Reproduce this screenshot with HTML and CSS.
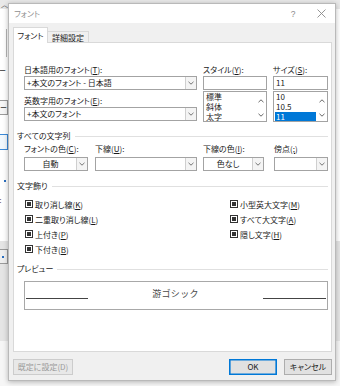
FILE: index.html
```html
<!DOCTYPE html>
<html lang="ja">
<head>
<meta charset="utf-8">
<title>フォント</title>
<link rel="stylesheet" href="styles.css">
</head>
<body>
<div class="bg">
  <div class="bg-r r1"><span class="caret">︿</span></div>
  <div class="bg-r r2"><div class="vline"></div></div>
  <div class="bg-r r3"><span class="frag">ター</span></div>
  <div class="bg-r r4"><div class="fbox">ー</div></div>
  <div class="bg-r r5"><div class="fbox blue"></div></div>
  <div class="bg-r r6"><span class="frag">ン</span></div>
  <div class="bg-r r7"><span class="dot"></span></div>
  <div class="bg-r r8"><span class="frag">を:</span></div>
  <div class="bg-r r8b"><span class="frag">送</span></div>
  <div class="bg-r r9"><span class="frag">ー</span></div>
  <div class="bg-r r10"><div class="fbox small"><span class="dot"></span></div></div>
  <div class="bg-r r11"></div>
</div>

<div class="dialog">
  <div class="titlebar">
    <span class="title">フォント</span>
    <span class="tb-btn">?</span>
    <span class="tb-btn">
      <svg width="9" height="9" viewBox="0 0 9 9"><path d="M0.5 0.5 L8.5 8.5 M8.5 0.5 L0.5 8.5" stroke="#8a8a8a" stroke-width="0.9" fill="none"/></svg>
    </span>
  </div>
  <div class="dlg-body">
    <div class="tabs">
      <div class="tab active">フォント</div>
      <div class="tab">詳細設定</div>
    </div>
    <div class="panel">
      <div class="font-grid">
        <div class="col col-main">
          <div class="lbl">日本語用のフォント(<u>T</u>):</div>
          <div class="combo"><span class="val">+本文のフォント - 日本語</span><span class="arrow"><svg width="6" height="4" viewBox="0 0 6 4"><path d="M0.5 0.8 L3 3.2 L5.5 0.8" fill="none" stroke="#666" stroke-width="0.9"/></svg></span></div>
          <div class="lbl lbl-gap">英数字用のフォント(<u>E</u>):</div>
          <div class="combo"><span class="val">+本文のフォント</span><span class="arrow"><svg width="6" height="4" viewBox="0 0 6 4"><path d="M0.5 0.8 L3 3.2 L5.5 0.8" fill="none" stroke="#666" stroke-width="0.9"/></svg></span></div>
        </div>
        <div class="col col-style">
          <div class="lbl">スタイル(<u>Y</u>):</div>
          <div class="textbox"></div>
          <div class="listbox">
            <div class="items">
              <div class="item">標準</div>
              <div class="item">斜体</div>
              <div class="item">太字</div>
            </div>
            <div class="sb">
              <svg width="6" height="4" viewBox="0 0 6 4"><path d="M0.5 3.2 L3 0.8 L5.5 3.2" fill="none" stroke="#555" stroke-width="0.9"/></svg>
              <svg width="6" height="4" viewBox="0 0 6 4"><path d="M0.5 0.8 L3 3.2 L5.5 0.8" fill="none" stroke="#555" stroke-width="0.9"/></svg>
            </div>
          </div>
        </div>
        <div class="col col-size">
          <div class="lbl">サイズ(<u>S</u>):</div>
          <div class="textbox">11</div>
          <div class="listbox">
            <div class="items">
              <div class="item">10</div>
              <div class="item">10.5</div>
              <div class="item sel">11</div>
            </div>
            <div class="sb">
              <svg width="6" height="4" viewBox="0 0 6 4"><path d="M0.5 3.2 L3 0.8 L5.5 3.2" fill="none" stroke="#555" stroke-width="0.9"/></svg>
              <svg width="6" height="4" viewBox="0 0 6 4"><path d="M0.5 0.8 L3 3.2 L5.5 0.8" fill="none" stroke="#555" stroke-width="0.9"/></svg>
            </div>
          </div>
        </div>
      </div>

      <div class="group-h gh-all"><span>すべての文字列</span><i></i></div>
      <div class="color-row">
        <div class="col c-color">
          <div class="lbl">フォントの色(<u>C</u>):</div>
          <div class="combo"><span class="val center">自動</span><span class="arrow"><svg width="6" height="4" viewBox="0 0 6 4"><path d="M0.5 0.8 L3 3.2 L5.5 0.8" fill="none" stroke="#666" stroke-width="0.9"/></svg></span></div>
        </div>
        <div class="col c-under">
          <div class="lbl">下線(<u>U</u>):</div>
          <div class="combo"><span class="val"></span><span class="arrow"><svg width="6" height="4" viewBox="0 0 6 4"><path d="M0.5 0.8 L3 3.2 L5.5 0.8" fill="none" stroke="#666" stroke-width="0.9"/></svg></span></div>
        </div>
        <div class="col c-ucolor">
          <div class="lbl">下線の色(<u>I</u>):</div>
          <div class="combo"><span class="val center">色なし</span><span class="arrow"><svg width="6" height="4" viewBox="0 0 6 4"><path d="M0.5 0.8 L3 3.2 L5.5 0.8" fill="none" stroke="#666" stroke-width="0.9"/></svg></span></div>
        </div>
        <div class="col c-emph">
          <div class="lbl">傍点(<u>;</u>)</div>
          <div class="combo"><span class="val"></span><span class="arrow"><svg width="6" height="4" viewBox="0 0 6 4"><path d="M0.5 0.8 L3 3.2 L5.5 0.8" fill="none" stroke="#666" stroke-width="0.9"/></svg></span></div>
        </div>
      </div>

      <div class="group-h gh-deco"><span>文字飾り</span><i></i></div>
      <div class="checks">
        <div class="chk"><span class="box"><span></span></span>取り消し線(<u>K</u>)</div>
        <div class="chk"><span class="box"><span></span></span>小型英大文字(<u>M</u>)</div>
        <div class="chk"><span class="box"><span></span></span>二重取り消し線(<u>L</u>)</div>
        <div class="chk"><span class="box"><span></span></span>すべて大文字(<u>A</u>)</div>
        <div class="chk"><span class="box"><span></span></span>上付き(<u>P</u>)</div>
        <div class="chk"><span class="box"><span></span></span>隠し文字(<u>H</u>)</div>
        <div class="chk"><span class="box"><span></span></span>下付き(<u>B</u>)</div>
      </div>

      <div class="group-h gh-prev"><span>プレビュー</span><i></i></div>
      <div class="preview">
        <span class="pline pl-left"></span>
        <span class="ptext">游ゴシック</span>
        <span class="pline pl-right"></span>
      </div>
    </div>
    <div class="footer">
      <button class="btn disabled">既定に設定(D)</button>
      <span class="spacer"></span>
      <button class="btn default">OK</button>
      <button class="btn">キャンセル</button>
    </div>
  </div>
</div>
</body>
</html>
```

FILE: styles.css
```css
* { box-sizing: border-box; margin: 0; padding: 0; }
html, body { width: 340px; height: 386px; overflow: hidden; }
body {
  position: relative;
  background: #f4f4f4;
  font-family: "Noto Sans CJK JP", "Noto Sans", sans-serif;
  font-size: 8px;
  color: #1a1a1a;
  font-feature-settings: "palt";
}
u { text-decoration: underline; text-underline-offset: 1px; text-decoration-thickness: 0.7px; }

/* background application (mostly hidden behind the dialog) */
.bg { display: flex; flex-direction: column; width: 340px; height: 386px; }
.bg-r { display: flex; align-items: center; background: #ffffff; font-size: 7px; color: #333; }
.r1 { height: 9px; background: #e9e9e9; }
.caret { margin-left: 1px; font-size: 7px; color: #555; line-height: 9px; }
.r2 { height: 51px; align-items: flex-start; }
.vline { width: 1px; height: 28px; margin: 20px 0 0 6px; background: #b5b5b5; }
.r3 { height: 20px; }
.frag { margin-left: -7px; line-height: 9px; }
.r4 { height: 36px; align-items: flex-start; padding-top: 20px; }
.fbox { width: 30px; height: 15px; margin-left: -22px; border: 1px solid #9a9a9a; background: #f6f6f6; line-height: 13px; padding-left: 21px; font-size: 7px; }
.r5 { height: 38px; align-items: flex-start; padding-top: 18px; }
.fbox.blue { border-color: #3c8ad8; height: 16px; background: #f2f8fd; }
.r6 { height: 17px; }
.r7 { height: 20px; }
.dot { display: inline-block; width: 2px; height: 2px; margin-left: 4px; background: #2a6fc0; }
.r8 { height: 14px; align-items: flex-end; }
.r8b { height: 14px; align-items: flex-start; padding-top: 2px; }
.r9 { height: 22px; }
.r10 { height: 100px; background: #e5e5e5; align-items: flex-start; padding-top: 8px; }
.fbox.small { height: 15px; background: #efefef; padding-left: 20px; display: flex; align-items: center; }
.fbox.small .dot { margin-left: 3px; }
.r11 { flex: 1; background: #f6f6f6; }

/* dialog window */
.dialog {
  position: absolute;
  left: 8px;
  top: 3px;
  width: 328px;
  height: 378px;
  border: 1px solid #b9b9b9;
  background: #f0f0f0;
  box-shadow: 0 1px 5px rgba(0,0,0,0.28);
  display: flex;
  flex-direction: column;
}
.titlebar {
  height: 19px;
  background: #ffffff;
  display: flex;
  align-items: center;
  padding-left: 5px;
}
.title { flex: 1; color: #8f8f8f; font-size: 8px; line-height: 10px; }
.tb-btn {
  width: 28px;
  height: 19px;
  display: flex;
  align-items: center;
  justify-content: center;
  color: #8a8a8a;
  font-family: "Liberation Sans", sans-serif;
  font-size: 8.5px;
}

.dlg-body { flex: 1; display: flex; flex-direction: column; padding: 5px 3px 4px 4px; }
.tabs { display: flex; align-items: flex-end; height: 15px; margin-bottom: -1px; }
.tab {
  height: 12px;
  width: 41px;
  border: 1px solid #d9d9d9;
  border-bottom: none;
  border-left: none;
  background: #f0f0f0;
  text-align: center;
  line-height: 11px;
  color: #222;
}
.tab.active {
  position: relative;
  z-index: 1;
  width: 35px;
  height: 16px;
  border-left: 1px solid #d9d9d9;
  background: #ffffff;
  line-height: 15px;
  padding-bottom: 1px;
}

.panel {
  height: 310px;
  background: #ffffff;
  border: 1px solid #d9d9d9;
  padding: 22px 3px 0 3px;
}
.lbl { height: 10px; line-height: 10px; white-space: nowrap; }

.font-grid { display: grid; grid-template-columns: 173px 64px 55px; column-gap: 6px; margin-left: 7px; }
.col { display: flex; flex-direction: column; }
.combo {
  margin-top: 1px;
  height: 14px;
  border: 1px solid #a3a3a3;
  display: flex;
  background: #fff;
}
.combo .val { flex: 1; padding-left: 2px; line-height: 12px; white-space: nowrap; overflow: hidden; }
.combo .val.center { text-align: center; padding-left: 0; }
.combo .arrow {
  width: 11px;
  border-left: 1px solid #cfcfcf;
  background: #f4f4f4;
  display: flex;
  align-items: center;
  justify-content: center;
}
.lbl-gap { margin-top: 6px; }
.textbox {
  margin-top: 1px;
  height: 14px;
  border: 1px solid #a3a3a3;
  padding-left: 2px;
  line-height: 12px;
}
.listbox {
  margin-top: 1px;
  height: 31px;
  border: 1px solid #a3a3a3;
  display: flex;
  overflow: hidden;
}
.items { flex: 1; padding-left: 1px; }
.item { height: 10px; line-height: 10px; padding-left: 1px; }
.item.sel { background: #0078d7; color: #fff; }
.sb {
  width: 11px;
  display: flex;
  flex-direction: column;
  align-items: center;
  justify-content: space-between;
  padding: 7px 0 4px;
}

.group-h { display: flex; align-items: center; height: 10px; line-height: 10px; }
.group-h i { flex: 1; height: 1px; background: #e0e0e0; margin-left: 4px; }
.gh-all { margin-top: 9px; }
.color-row { display: flex; margin-left: 7px; margin-top: 3px; }
.color-row .combo { margin-top: 3px; }
.c-color { width: 64px; }
.c-under { width: 102px; margin-left: 7px; }
.c-ucolor { width: 61px; margin-left: 6px; }
.c-emph { width: 54px; margin-left: 10px; }

.gh-deco { margin-top: 10px; }
.checks {
  display: grid;
  grid-template-columns: 205px 1fr;
  grid-auto-rows: 15px;
  margin: 5.5px 0 0 8px;
}
.chk { display: flex; align-items: center; white-space: nowrap; }
.chk .box {
  width: 8px;
  height: 8px;
  border: 1px solid #333;
  padding: 1px;
  margin-right: 2px;
  display: flex;
}
.chk .box span { flex: 1; background: #333; }

.gh-prev { margin-top: 7.5px; }
.preview {
  margin: 7px 0 0 7px;
  height: 29px;
  border: 1px solid #a8a8a8;
  display: flex;
  align-items: flex-start;
}
.pline { height: 1px; background: #444; margin-top: 16px; }
.pl-left { width: 62px; margin-left: 1px; }
.pl-right { width: 63px; margin-right: 1px; }
.ptext { flex: 1; text-align: center; line-height: 24px; font-size: 9px; color: #4a4a4a; font-feature-settings: normal; letter-spacing: 0.3px; }

.footer { display: flex; margin-top: 7px; height: 16px; }
.spacer { flex: 1; }
.btn {
  height: 16px;
  width: 48px;
  border: 1px solid #adadad;
  background: #e1e1e1;
  font-family: inherit;
  font-size: 8px;
  color: #1a1a1a;
  line-height: 14px;
  font-feature-settings: "palt";
}
.btn.default { border-color: #0078d7; box-shadow: inset 0 0 0 0.6px #0078d7; margin-right: 7px; }
.btn.disabled { width: 60px; color: #9a9a9a; border-color: #cccccc; background: #e8e8e8; }
```
